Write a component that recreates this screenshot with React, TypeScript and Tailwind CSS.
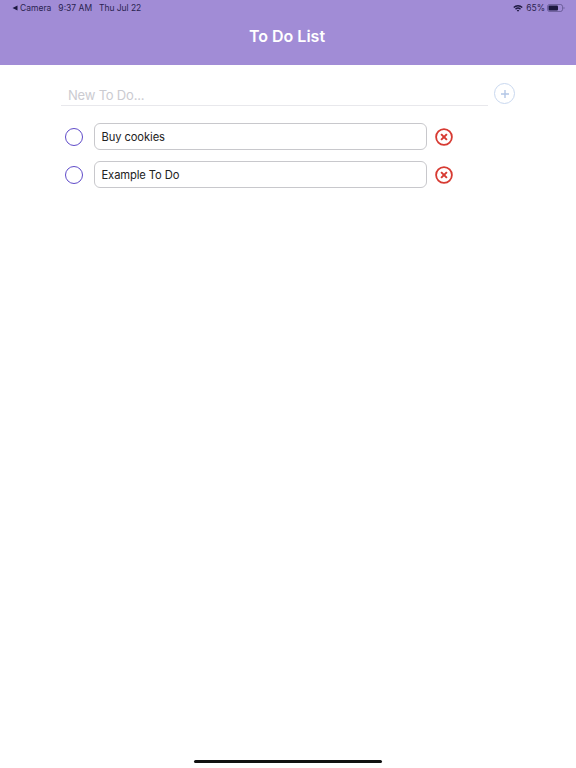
export default function App() {
  const items = ["Buy cookies", "Example To Do"];
  return (
    <div className="w-[576px] h-[768px] bg-white flex flex-col overflow-hidden font-['Inter','Liberation_Sans',sans-serif]">
      <header className="h-[65px] shrink-0 bg-[#a18cd6] flex flex-col">
        <div className="h-4 flex items-center justify-between pl-3 pr-[11px] text-[8.5px] text-[#2a2350]">
          <div className="flex items-center">
            <svg width="6" height="6" viewBox="0 0 6 6" className="mr-[2px]"><path d="M0.5 3 L5.5 0.5 V5.5 Z" fill="#1d1840" /></svg>
            <span>Camera</span>
            <span className="ml-[7px]">9:37 AM</span>
            <span className="ml-[7px] tracking-[-0.05px]">Thu Jul 22</span>
          </div>
          <div className="flex items-center">
            <svg width="10" height="8" viewBox="0 0 11 8" className="mr-[3px]">
              <path d="M0.3 2.8 A7.4 7.4 0 0 1 10.7 2.8 L9.6 3.9 A5.9 5.9 0 0 0 1.4 3.9 Z" fill="#1d1840" />
              <path d="M2.2 4.7 A4.7 4.7 0 0 1 8.8 4.7 L7.7 5.8 A3.2 3.2 0 0 0 3.3 5.8 Z" fill="#1d1840" />
              <path d="M4.1 6.6 A2 2 0 0 1 6.9 6.6 L5.5 8 Z" fill="#1d1840" />
            </svg>
            <span>65%</span>
            <svg width="18" height="8" viewBox="0 0 18 8" className="ml-[2px]">
              <rect x="0.5" y="0.5" width="15" height="7" rx="2" fill="none" stroke="#2a2350" strokeOpacity="0.4" />
              <rect x="1.5" y="1.5" width="9.5" height="5" rx="1" fill="#1d1840" />
              <path d="M16.5 2.8 C17.3 3 17.5 3.5 17.5 4 C17.5 4.5 17.3 5 16.5 5.2 Z" fill="#2a2350" fillOpacity="0.4" />
            </svg>
          </div>
        </div>
        <div className="flex-1 flex items-start justify-center pt-[9px] pr-[2px]">
          <h1 className="text-white font-semibold text-[16px] leading-[22px]">To Do List</h1>
        </div>
      </header>

      <main className="flex flex-col pl-[61px] pt-[17px]">
        <div className="flex items-start h-[24px]">
          <div className="w-[427px] h-[24px] border-b border-[#e8e8ec] pl-[7px] text-[13px] tracking-[-0.2px] leading-[26px] text-[#cbcbd1]">New To Do...</div>
          <div className="ml-[6px] mt-[1px] w-[21px] h-[21px] rounded-full border-[1.5px] border-[#c9d8ef] flex items-center justify-center">
            <svg width="8" height="8" viewBox="0 0 8 8"><path d="M4 0 V8 M0 4 H8" stroke="#b3c6e6" strokeWidth="1.4" /></svg>
          </div>
        </div>
        <div className="flex flex-col gap-[11px] mt-[17px]">
          {items.map((t) => (
            <div key={t} className="flex items-center">
              <div className="w-[18px] h-[18px] ml-[4px] rounded-full border-[1.3px] border-[#5f4bc9]" />
              <div className="ml-[11px] w-[333px] h-[27px] rounded-[6px] border border-[#c8c8cc] pl-[6.5px] pt-[1px] flex items-center text-[11.2px] tracking-[-0.1px] text-[#222]">{t}</div>
              <svg width="18" height="18" viewBox="0 0 18 18" className="ml-[8px]">
                <circle cx="9" cy="9" r="7.9" fill="none" stroke="#d73a32" strokeWidth="1.8" />
                <path d="M6.1 6.1 L11.9 11.9 M11.9 6.1 L6.1 11.9" stroke="#d73a32" strokeWidth="2" />
              </svg>
            </div>
          ))}
        </div>
      </main>

      <div className="mt-auto mb-[5px] mx-auto w-[188px] h-[3px] rounded-full bg-[#111]" />
    </div>
  );
}
